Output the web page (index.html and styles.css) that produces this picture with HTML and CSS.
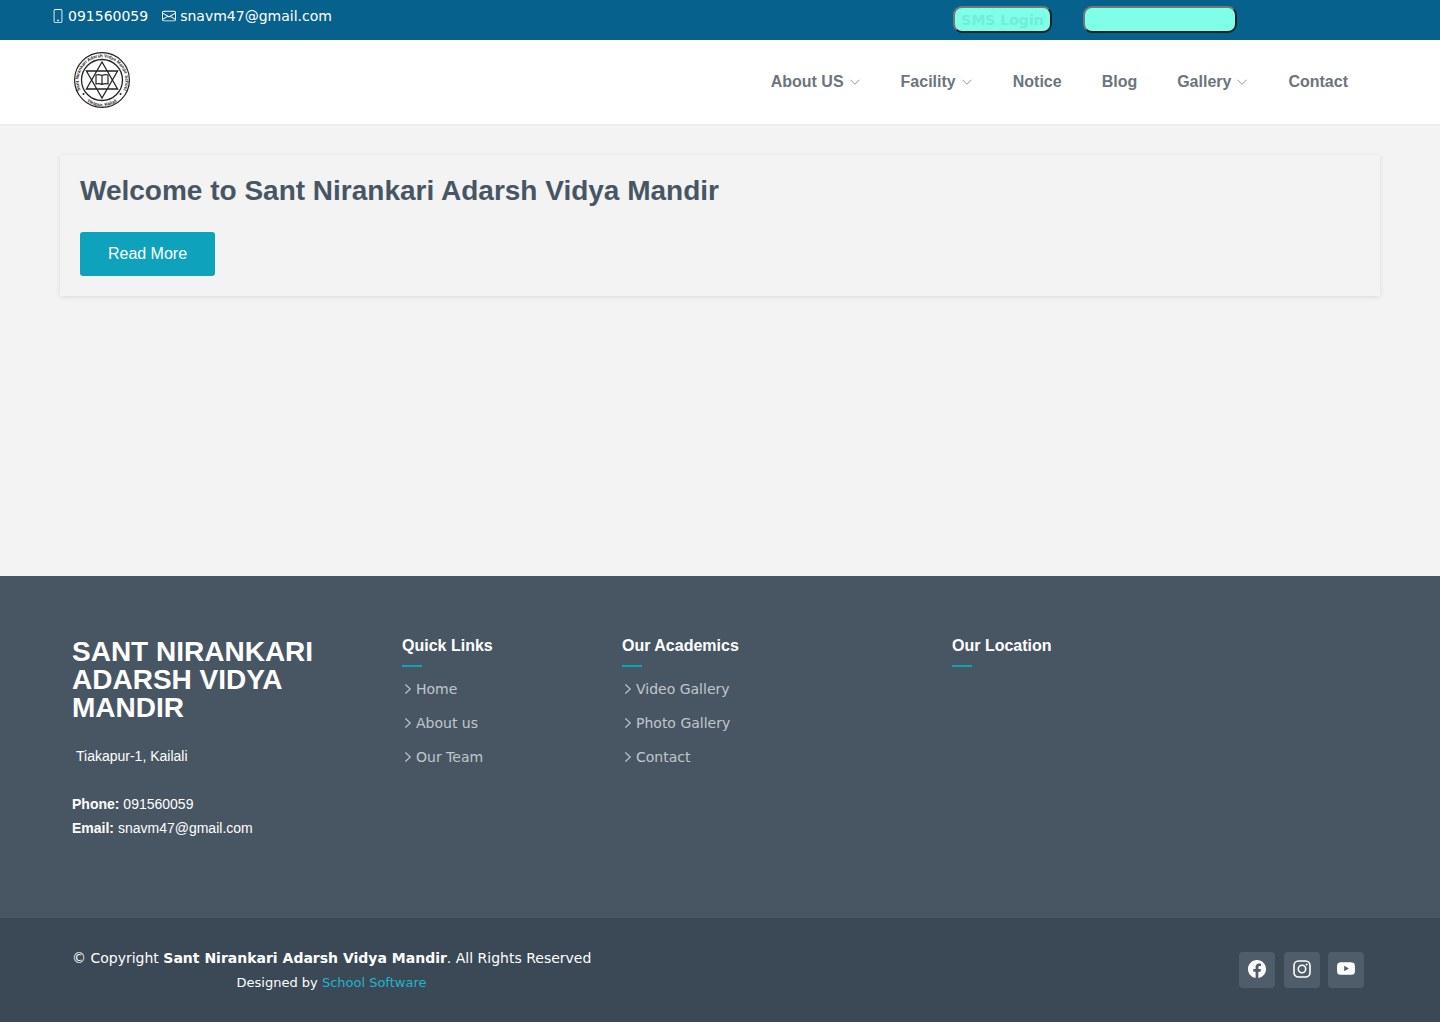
FILE: index.html
```html
<!DOCTYPE html>
<html lang="en">
<head>
<meta charset="utf-8">
<title>Sant Nirankari Adarsh Vidya Mandir</title>
<link rel="stylesheet" href="styles.css">
</head>
<body>
<div class="topbar">
  <div class="contact-info">
    <span class="ti"><svg class="ti-icon phone" width="14" height="14" viewBox="0 0 16 16" fill="currentColor"><path d="M11 1a1 1 0 0 1 1 1v12a1 1 0 0 1-1 1H5a1 1 0 0 1-1-1V2a1 1 0 0 1 1-1h6zM5 0a2 2 0 0 0-2 2v12a2 2 0 0 0 2 2h6a2 2 0 0 0 2-2V2a2 2 0 0 0-2-2H5z"/><path d="M8 14a1 1 0 1 0 0-2 1 1 0 0 0 0 2z"/></svg>091560059</span>
    <span class="ti"><svg class="ti-icon mail" width="14" height="14" viewBox="0 0 16 16" fill="currentColor"><path d="M0 4a2 2 0 0 1 2-2h12a2 2 0 0 1 2 2v8a2 2 0 0 1-2 2H2a2 2 0 0 1-2-2V4zm2-1a1 1 0 0 0-1 1v.2l7 4.2 7-4.2V4a1 1 0 0 0-1-1H2zm13 2.4-4.7 2.8L15 11.1V5.4zm-.03 6.9L9.35 8.8 8 9.6l-1.35-.8-5.62 3.5A1 1 0 0 0 2 13h12a1 1 0 0 0 .97-.7zM1 11.1l4.7-2.9L1 5.4v5.7z"/></svg>snavm47@gmail.com</span>
  </div>
  <div class="top-actions">
    <button class="aqua-btn sms">SMS Login</button>
    <button class="aqua-btn blank"></button>
  </div>
</div>

<header class="site-header">
  <svg class="logo" width="60" height="60" viewBox="0 0 60 60">
    <defs>
      <path id="ringTop" d="M9 41A23.400 23.400 0 1 1 51 41"/>
      <path id="ringBottom" d="M13 50A26.500 26.500 0 0 0 47 50"/>
    </defs>
    <circle cx="30" cy="30" r="27.400" fill="#fff" stroke="#222" stroke-width="1.200"/>
    <circle cx="30" cy="30" r="20.500" fill="none" stroke="#222" stroke-width="1.300"/>
    <text class="ring-text"><textPath href="#ringTop" startOffset="50%" text-anchor="middle">Sant Nirankari Adarsh Vidya Mandir School</textPath></text>
    <text class="ring-text"><textPath href="#ringBottom" startOffset="50%" text-anchor="middle">Tikapur, Kailali</textPath></text>
    <path d="M30 12 45.600 39H14.400Z M30 48 14.400 21H45.600Z" fill="none" stroke="#222" stroke-width="1.300"/>
    <path d="M24 25q3-1 6 .500q3-1.500 6-.500v9q-3-1-6 .500q-3-1.500-6-.500Z M30 25.500v9" fill="none" stroke="#222" stroke-width="1.200"/>
    <circle cx="11.500" cy="44" r="1" fill="#222"/>
    <circle cx="48.500" cy="44" r="1" fill="#222"/>
  </svg>
  <nav class="main-nav">
    <a href="#">About US<svg class="caret" width="12" height="12" viewBox="0 0 16 16"><path d="M2 5l6 6 6-6" fill="none" stroke="currentColor"/></svg></a>
    <a href="#">Facility<svg class="caret" width="12" height="12" viewBox="0 0 16 16"><path d="M2 5l6 6 6-6" fill="none" stroke="currentColor"/></svg></a>
    <a href="#">Notice</a>
    <a href="#">Blog</a>
    <a href="#">Gallery<svg class="caret" width="12" height="12" viewBox="0 0 16 16"><path d="M2 5l6 6 6-6" fill="none" stroke="currentColor"/></svg></a>
    <a href="#">Contact</a>
  </nav>
</header>

<main class="content">
  <section class="welcome-card">
    <h1>Welcome to Sant Nirankari Adarsh Vidya Mandir</h1>
    <a class="read-more" href="#">Read More</a>
  </section>
</main>

<footer>
  <div class="footer-top">
    <div class="col col-about">
      <h3>SANT NIRANKARI ADARSH VIDYA MANDIR</h3>
      <p class="address">Tiakapur-1, Kailali</p>
      <p class="contact-lines"><strong>Phone:</strong> 091560059<br><strong>Email:</strong> snavm47@gmail.com</p>
    </div>
    <div class="col col-quick">
      <h4>Quick Links</h4>
      <ul>
        <li><svg class="chev" width="12" height="12" viewBox="0 0 16 16"><path d="M4.500 2l6.500 6-6.500 6" fill="none" stroke="currentColor" stroke-width="1.500"/></svg>Home</li>
        <li><svg class="chev" width="12" height="12" viewBox="0 0 16 16"><path d="M4.500 2l6.500 6-6.500 6" fill="none" stroke="currentColor" stroke-width="1.500"/></svg>About us</li>
        <li><svg class="chev" width="12" height="12" viewBox="0 0 16 16"><path d="M4.500 2l6.500 6-6.500 6" fill="none" stroke="currentColor" stroke-width="1.500"/></svg>Our Team</li>
      </ul>
    </div>
    <div class="col col-acad">
      <h4>Our Academics</h4>
      <ul>
        <li><svg class="chev" width="12" height="12" viewBox="0 0 16 16"><path d="M4.500 2l6.500 6-6.500 6" fill="none" stroke="currentColor" stroke-width="1.500"/></svg>Video Gallery</li>
        <li><svg class="chev" width="12" height="12" viewBox="0 0 16 16"><path d="M4.500 2l6.500 6-6.500 6" fill="none" stroke="currentColor" stroke-width="1.500"/></svg>Photo Gallery</li>
        <li><svg class="chev" width="12" height="12" viewBox="0 0 16 16"><path d="M4.500 2l6.500 6-6.500 6" fill="none" stroke="currentColor" stroke-width="1.500"/></svg>Contact</li>
      </ul>
    </div>
    <div class="col col-loc">
      <h4>Our Location</h4>
    </div>
  </div>
  <div class="footer-bottom">
    <div class="copy">
      <div class="copy-line">© Copyright <strong>Sant Nirankari Adarsh Vidya Mandir</strong>. All Rights Reserved</div>
      <div class="credit">Designed by <a href="#">School Software</a></div>
    </div>
    <div class="social">
      <a href="#"><svg width="18" height="18" viewBox="0 0 16 16" fill="#fff"><path d="M16 8.049c0-4.446-3.582-8.05-8-8.05C3.58 0-.002 3.603-.002 8.05c0 4.017 2.926 7.347 6.75 7.951v-5.625h-2.03V8.05H6.750V6.275c0-2.017 1.195-3.131 3.022-3.131.876 0 1.791.157 1.791.157v1.98h-1.009c-.993 0-1.303.621-1.303 1.258v1.51h2.218l-.354 2.326H9.250V16c3.824-.604 6.75-3.934 6.75-7.951z"/></svg></a>
      <a href="#"><svg width="18" height="18" viewBox="0 0 18 18" fill="none" stroke="#fff"><rect x="1" y="1" width="16" height="16" rx="4.500" stroke-width="1.600"/><circle cx="9" cy="9" r="3.700" stroke-width="1.600"/><circle cx="13.600" cy="4.400" r="1" fill="#fff" stroke="none"/></svg></a>
      <a href="#"><svg width="18" height="18" viewBox="0 0 16 16" fill="#fff"><path d="M8.051 1.999h.089c.822.003 4.987.033 6.110.335a2.010 2.010 0 0 1 1.415 1.420c.101.380.172.883.220 1.402l.010.104.022.260.008.104c.065.914.073 1.770.074 1.957v.075c-.001.194-.010 1.108-.082 2.060l-.008.105-.009.104c-.050.572-.124 1.140-.235 1.558a2.007 2.007 0 0 1-1.415 1.420c-1.160.312-5.569.334-6.180.335h-.142c-.309 0-1.587-.006-2.927-.052l-.170-.006-.087-.004-.171-.007-.171-.007c-1.110-.049-2.167-.128-2.654-.260a2.007 2.007 0 0 1-1.415-1.419c-.111-.417-.185-.986-.235-1.558L.090 9.820l-.008-.104A31.400 31.400 0 0 1 0 7.680v-.123c.002-.215.010-.958.064-1.778l.007-.103.003-.052.008-.104.022-.260.010-.104c.048-.519.119-1.023.220-1.402a2.007 2.007 0 0 1 1.415-1.420c.487-.130 1.544-.210 2.654-.260l.170-.007.172-.006.086-.003.171-.007A99.788 99.788 0 0 1 7.858 2h.193zM6.400 5.209v4.818l4.157-2.408L6.400 5.209z"/></svg></a>
    </div>
  </div>
</footer>
</body>
</html>
```

FILE: styles.css
```css
* { box-sizing: border-box; }
html, body { margin: 0; padding: 0; }
body {
  height: 1022px;
  display: flex;
  flex-direction: column;
  overflow: hidden;
  background: #f3f3f3;
  font-family: "DejaVu Sans", sans-serif;
}

.topbar {
  height: 40px;
  flex: none;
  display: flex;
  background: #07618d;
  color: #fff;
  font-size: 14px;
  line-height: 16px;
}
.contact-info {
  display: flex;
  align-items: flex-start;
  gap: 14px;
  padding: 8px 0 0 52px;
  width: 953px;
}
.ti { display: inline-flex; align-items: center; }
.ti-icon { margin-right: 2px; }
.ti-icon.phone { margin-left: -1px; margin-right: 3px; }
.ti-icon.mail { margin-right: 4px; }
.top-actions { display: flex; gap: 31px; padding-top: 6px; align-items: flex-start; }
.aqua-btn {
  height: 27px;
  padding: 0;
  background: #7fffe8;
  border: 2px solid;
  border-color: #767676 #222 #222 #767676;
  border-radius: 9px;
  color: #72ecdb;
  font-family: "DejaVu Sans", sans-serif;
  font-size: 14px;
  font-weight: 700;
}
.sms { width: 99px; }
.blank { width: 154px; }

.site-header {
  height: 84px;
  flex: none;
  display: flex;
  justify-content: space-between;
  align-items: center;
  padding: 0 92px 0 72px;
  background: #fff;
  box-shadow: 0 1px 2px rgba(0, 0, 0, 0.05);
}
.logo { display: block; margin-top: -4px; }
.ring-text { font-family: "Liberation Sans", sans-serif; font-size: 4.5px; font-weight: 700; fill: #222; }
.main-nav { display: flex; gap: 40px; }
.main-nav a {
  display: flex;
  align-items: center;
  color: #6c757d;
  font-family: "Liberation Sans", sans-serif;
  font-size: 16px;
  font-weight: 700;
  text-decoration: none;
}
.caret { margin-left: 5px; }

.content { flex: 1; padding: 31px 60px 0; }
.welcome-card {
  height: 141px;
  padding: 20px;
  background: #f3f3f3;
  box-shadow: 0 1px 5px rgba(0, 0, 0, 0.1);
}
.welcome-card h1 {
  margin: 0 0 26px;
  color: #485664;
  font-family: "Liberation Sans", sans-serif;
  font-size: 28px;
  font-weight: 700;
  line-height: 31px;
}
.read-more {
  display: block;
  width: 135px;
  height: 44px;
  background: #0ea2bd;
  border-radius: 3px;
  color: #fff;
  font-family: "Liberation Sans", sans-serif;
  font-size: 16px;
  line-height: 44px;
  text-align: center;
  text-decoration: none;
}

footer { flex: none; color: #fff; }
.footer-top {
  height: 342px;
  display: flex;
  padding: 60px 0 0 72px;
  background: #485664;
}
.col-about { width: 330px; }
.col-quick { width: 220px; }
.col-acad { width: 330px; }
.col h3 {
  width: 270px;
  margin: 2px 0 0;
  font-family: "Liberation Sans", sans-serif;
  font-size: 28px;
  font-weight: 700;
  line-height: 28px;
}
.address {
  margin: 22px 0 0;
  padding-left: 4px;
  font-family: "Liberation Sans", sans-serif;
  font-size: 14px;
  line-height: 24px;
}
.contact-lines {
  margin: 24px 0 0;
  font-family: "Liberation Sans", sans-serif;
  font-size: 14px;
  line-height: 24px;
}
.col h4 {
  position: relative;
  margin: 0;
  height: 31px;
  padding-bottom: 12px;
  font-family: "Liberation Sans", sans-serif;
  font-size: 16px;
  font-weight: 700;
  line-height: 19px;
}
.col h4::after {
  content: "";
  position: absolute;
  left: 0;
  bottom: 0;
  width: 20px;
  height: 2px;
  background: #0ea2bd;
}
.col ul { margin: 5px 0 0; padding: 0; list-style: none; }
.col li {
  display: flex;
  align-items: center;
  height: 34px;
  color: #c0c6cc;
  font-size: 14px;
}
.chev { margin-right: 2px; flex: none; }

.footer-bottom {
  height: 104px;
  display: flex;
  justify-content: space-between;
  padding: 30px 76px 0 72px;
  background: #3b4856;
}
.copy { font-size: 14px; }
.copy-line { line-height: 20px; }
.credit { margin-top: 5px; font-size: 13px; line-height: 20px; text-align: center; width: 519px; }
.credit a { color: #1fb5cf; text-decoration: none; }
.social { display: flex; gap: 8.5px; padding-top: 4px; }
.social a {
  display: flex;
  align-items: center;
  justify-content: center;
  width: 36px;
  height: 36px;
  background: #4f5c69;
  border-radius: 4px;
}
.social svg { margin-bottom: 2px; }
```
